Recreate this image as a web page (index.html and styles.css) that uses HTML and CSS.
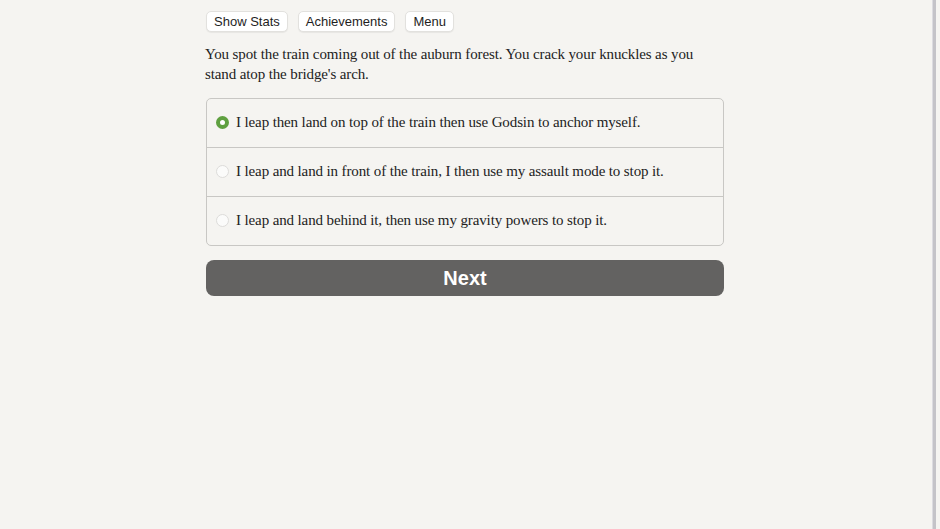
FILE: index.html
```html
<!DOCTYPE html>
<html lang="en">
  <head>
    <meta charset="UTF-8" />
    <meta name="viewport" content="width=device-width, initial-scale=1.0" />
    <title>Choice of Games</title>
    <link rel="stylesheet" href="styles.css">
  </head>
  <body>
    <div class="page">
      <div class="game">
        <div class="toolbar">
          <button class="tool-button">Show Stats</button>
          <button class="tool-button">Achievements</button>
          <button class="tool-button">Menu</button>
        </div>

        <p class="story">
          You spot the train coming out of the auburn forest. You crack your
          knuckles as you stand atop the bridge's arch.
        </p>

        <div class="choices">
          <label class="choice">
            <span class="radio checked"></span>
            <span>I leap then land on top of the train then use Godsin to anchor myself.</span>
          </label>
          <label class="choice">
            <span class="radio"></span>
            <span>I leap and land in front of the train, I then use my assault mode to stop it.</span>
          </label>
          <label class="choice">
            <span class="radio"></span>
            <span>I leap and land behind it, then use my gravity powers to stop it.</span>
          </label>
        </div>

        <button class="next-button">Next</button>
      </div>
      <div class="scroll-strip"></div>
    </div>
  </body>
</html>
```

FILE: styles.css
```css
body {
  margin: 0;
  background: #f5f4f1;
  font-family: "Liberation Serif", "DejaVu Serif", serif;
  color: #222;
}

.page {
  display: flex;
  min-height: 100vh;
}

.game {
  flex: 1;
  display: flex;
  flex-direction: column;
  width: 519px;
  max-width: 519px;
  margin-left: 205px;
  padding-top: 11px;
}

.scroll-strip {
  margin-left: auto;
  width: 3px;
  margin-right: 4px;
  background: #c4c3c8;
  border-left: 1px solid #dcdbe0;
}

.toolbar {
  display: flex;
  gap: 10px;
  padding-left: 1px;
}

.tool-button {
  font-family: "Liberation Sans", Arial, sans-serif;
  font-size: 13px;
  color: #1e1e1e;
  background: #fff;
  border: 1px solid #e2e1de;
  border-radius: 5px;
  height: 21px;
  padding: 0 7px;
  box-shadow: 0 1px 1px rgba(0, 0, 0, 0.06);
}

.story {
  margin: 12px 0 14px;
  font-size: 15px;
  letter-spacing: -0.12px;
  line-height: 20px;
}

.choices {
  border: 1px solid #c8c7c4;
  border-radius: 5px;
  margin-left: 1px;
}

.choice {
  display: flex;
  align-items: center;
  gap: 7px;
  height: 47px;
  padding-left: 9px;
  padding-bottom: 1px;
  font-size: 15px;
  letter-spacing: -0.12px;
  border-top: 1px solid #c8c7c4;
}

.choice:first-child {
  border-top: none;
}

.radio {
  width: 11px;
  height: 11px;
  border-radius: 50%;
  background: #fbfbfa;
  border: 1px solid #dddcda;
  flex-shrink: 0;
}

.radio.checked {
  width: 5px;
  height: 5px;
  background: #fff;
  border: 4px solid #5fa040;
}

.next-button {
  margin: 14px 0 0 1px;
  height: 36px;
  border: none;
  border-radius: 8px;
  background: #636261;
  color: #fff;
  font-family: "Liberation Sans", Arial, sans-serif;
  font-weight: 700;
  font-size: 20px;
}
```
